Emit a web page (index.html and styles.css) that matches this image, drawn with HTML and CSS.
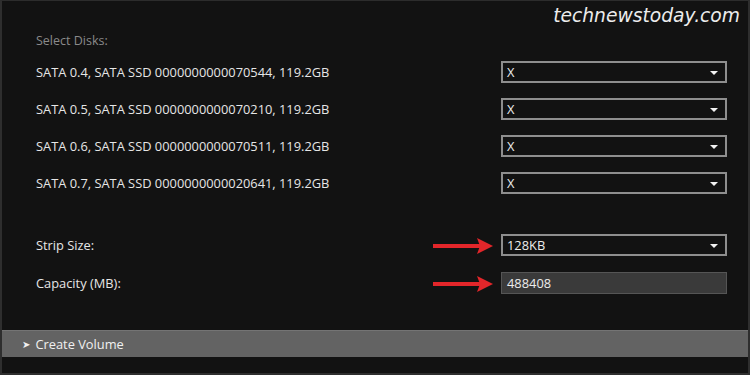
FILE: index.html
```html
<!DOCTYPE html>
<html>
<head>
<meta charset="utf-8">
<link rel="stylesheet" href="styles.css">
</head>
<body>
<div class="screen">
  <div class="watermark">technewstoday.com</div>
  <div class="content">
    <div class="section-title">Select Disks:</div>
    <div class="disks">
      <div class="row">
        <div class="label">SATA 0.4, SATA SSD 0000000000070544, 119.2GB</div>
        <div class="arrow-cell"></div>
        <div class="select"><span>X</span><span class="caret"></span></div>
      </div>
      <div class="row">
        <div class="label">SATA 0.5, SATA SSD 0000000000070210, 119.2GB</div>
        <div class="arrow-cell"></div>
        <div class="select"><span>X</span><span class="caret"></span></div>
      </div>
      <div class="row">
        <div class="label">SATA 0.6, SATA SSD 0000000000070511, 119.2GB</div>
        <div class="arrow-cell"></div>
        <div class="select"><span>X</span><span class="caret"></span></div>
      </div>
      <div class="row">
        <div class="label">SATA 0.7, SATA SSD 0000000000020641, 119.2GB</div>
        <div class="arrow-cell"></div>
        <div class="select"><span>X</span><span class="caret"></span></div>
      </div>
    </div>
    <div class="settings">
      <div class="row">
        <div class="label">Strip Size:</div>
        <div class="arrow-cell">
          <svg class="arrow" width="60" height="16" viewBox="0 0 60 16"><line x1="0" y1="8" x2="50" y2="8" stroke="#e3262a" stroke-width="4"/><polygon points="44,0 60,8 44,16 47,8" fill="#e3262a"/></svg>
        </div>
        <div class="select"><span>128KB</span><span class="caret"></span></div>
      </div>
      <div class="row">
        <div class="label">Capacity (MB):</div>
        <div class="arrow-cell">
          <svg class="arrow" width="60" height="16" viewBox="0 0 60 16"><line x1="0" y1="8" x2="50" y2="8" stroke="#e3262a" stroke-width="4"/><polygon points="44,0 60,8 44,16 47,8" fill="#e3262a"/></svg>
        </div>
        <div class="input">488408</div>
      </div>
    </div>
  </div>
  <div class="action-bar"><span class="pointer">&#10148;</span><span>Create Volume</span></div>
</div>
</body>
</html>
```

FILE: styles.css
```css
html, body {
  margin: 0;
  padding: 0;
  background: #121212;
}

.screen {
  position: relative;
  box-sizing: border-box;
  width: 750px;
  height: 375px;
  background: #121212;
  border-top: 1px solid #2c2c2c;
  border-left: 2px solid #2e2e2e;
  border-right: 2px solid #2e2e2e;
  border-bottom: 2px solid #2e2e2e;
  font-family: "Open Sans", "Noto Sans", sans-serif;
  font-size: 12.85px;
  color: #e6e6e6;
  overflow: hidden;
}

.watermark {
  position: absolute;
  top: 4px;
  right: 8px;
  font-family: "DejaVu Sans", sans-serif;
  font-style: italic;
  font-size: 18.7px;
  color: #ececec;
}

.content {
  padding: 31px 21px 0 34px;
}

.section-title {
  color: #8a8a8a;
  font-size: 12.5px;
  height: 18px;
  line-height: 18px;
}

.disks {
  margin-top: 11px;
  display: flex;
  flex-direction: column;
  gap: 15px;
}

.settings {
  margin-top: 40px;
  display: flex;
  flex-direction: column;
  gap: 16px;
}

.row {
  display: grid;
  grid-template-columns: 1fr 60px 226px;
  column-gap: 8px;
  align-items: center;
  height: 22px;
}

.label {
  white-space: nowrap;
  line-height: 22px;
}

.arrow-cell {
  display: flex;
  align-items: center;
  height: 22px;
}

.arrow {
  display: block;
  margin-top: 2px;
}

.select {
  box-sizing: border-box;
  height: 22px;
  border: 2px solid #8e8e8e;
  display: flex;
  align-items: center;
  justify-content: space-between;
  padding: 0 7px 0 4px;
  color: #ececec;
}

.caret {
  width: 0;
  height: 0;
  border-left: 4px solid transparent;
  border-right: 4px solid transparent;
  border-top: 4px solid #f2f2f2;
  margin-top: 1px;
}

.input {
  box-sizing: border-box;
  height: 22px;
  background: #3a3a3a;
  border: 1px solid #555555;
  display: flex;
  align-items: center;
  padding: 0 5px;
  color: #ececec;
}

.action-bar {
  margin-top: 36px;
  box-sizing: border-box;
  height: 27px;
  background: #636363;
  border-top: 1px solid #747474;
  display: flex;
  align-items: center;
  gap: 5px;
  padding-left: 20px;
  color: #f0f0f0;
}

.pointer {
  font-family: "DejaVu Sans", sans-serif;
  font-size: 10px;
  color: #f0f0f0;
}
```
